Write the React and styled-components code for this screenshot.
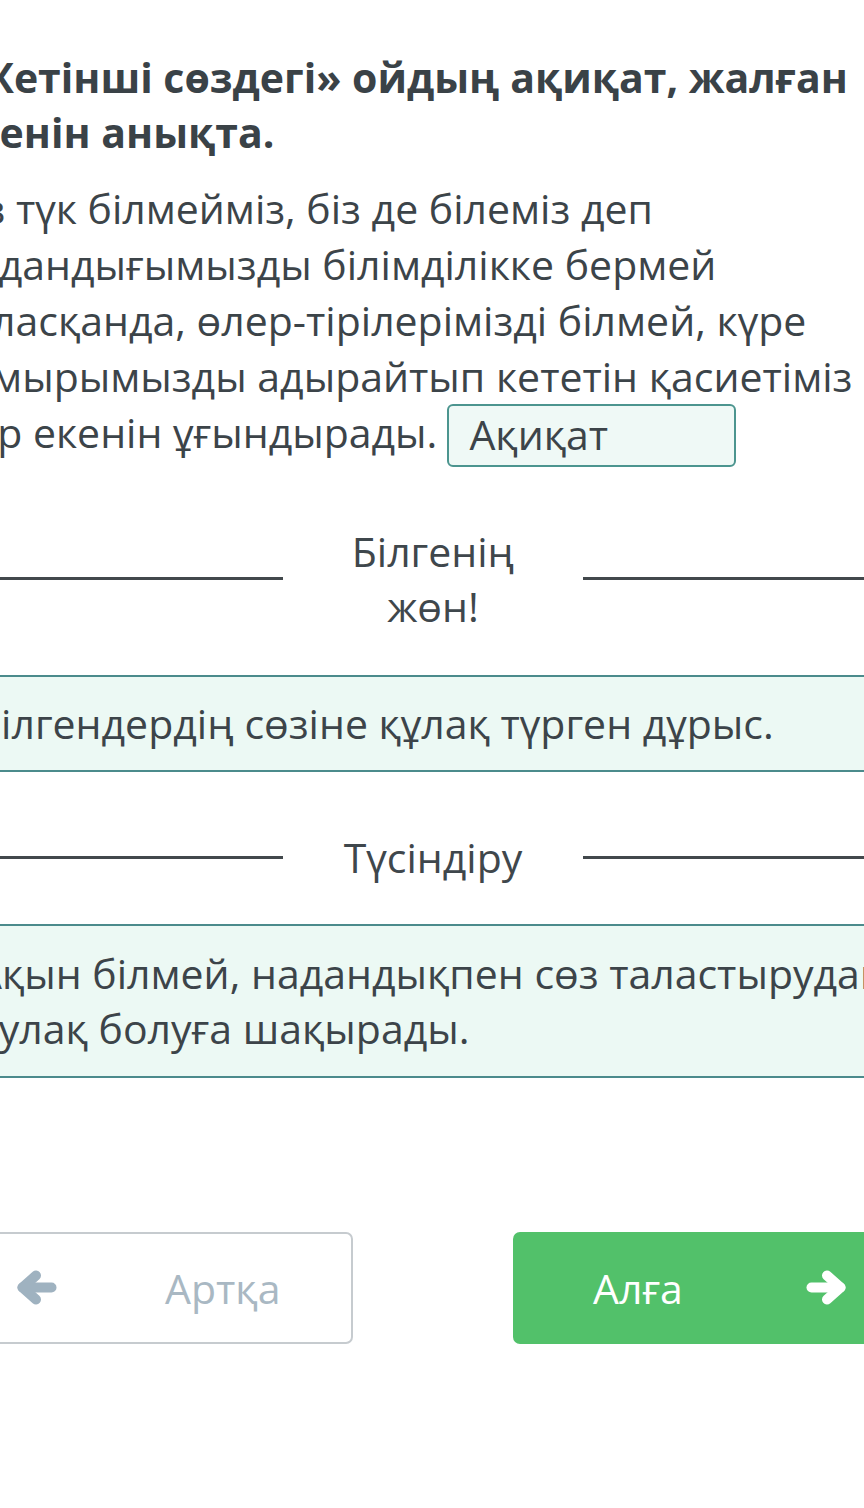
import React from "react";
import styled, { createGlobalStyle } from "styled-components";

const GlobalStyle = createGlobalStyle`
  html, body {
    margin: 0;
    padding: 0;
    background: #ffffff;
    overflow-x: hidden;
  }
  body {
    font-family: "Open Sans", "Noto Sans", sans-serif;
    color: #3c4449;
  }
`;

const Viewport = styled.div`
  width: 100%;
  overflow: hidden;
`;

const Page = styled.div`
  width: 966px;
  margin-left: -50px;
  padding-top: 50px;
  padding-bottom: 165px;
`;

const Title = styled.h2`
  margin: 0;
  font-size: 41px;
  line-height: 55px;
  font-weight: 700;
  color: #3a4247;
  white-space: nowrap;
`;

const Passage = styled.p`
  margin: 20px 0 0;
  font-size: 41px;
  line-height: 56px;
  color: #3c4449;
  white-space: nowrap;
`;

const Answer = styled.span`
  display: inline-block;
  vertical-align: middle;
  position: relative;
  top: -2px;
  box-sizing: border-box;
  width: 289px;
  height: 63px;
  margin-left: 10px;
  padding: 0 20px;
  border: 2px solid #4c958f;
  border-radius: 6px;
  background: #eff9f6;
  line-height: 57px;
`;

const Divider = styled.div`
  display: grid;
  grid-template-columns: 1fr 210px 1fr;
  column-gap: 45px;
  align-items: center;
  margin-top: ${(p) => p.$top}px;
`;

const Rule = styled.div`
  height: 3px;
  background: #42484c;
`;

const DividerLabel = styled.div`
  text-align: center;
  font-size: 41px;
  line-height: 55px;
  color: #3f474c;
`;

const Panel = styled.div`
  margin-top: ${(p) => p.$top}px;
  padding: ${(p) => p.$pad}px 26px;
  border-top: 2px solid #4b8b8c;
  border-bottom: 2px solid #4b8b8c;
  background: #ecf9f4;
  font-size: 41px;
  line-height: ${(p) => p.$lh}px;
  color: #3c4449;
  white-space: nowrap;
`;

const Nav = styled.div`
  display: flex;
  justify-content: space-between;
  margin-top: 154px;
`;

const NavButton = styled.button`
  box-sizing: border-box;
  width: 403px;
  height: 112px;
  display: flex;
  align-items: center;
  padding: 0 0 0 ${(p) => p.$padLeft}px;
  border-radius: 7px;
  font-family: "Open Sans", sans-serif;
  font-size: 41px;
  cursor: pointer;
  border: ${(p) => (p.$primary ? "none" : "2px solid #c6cbcf")};
  background: ${(p) => (p.$primary ? "#52c16a" : "#ffffff")};
  color: ${(p) => (p.$primary ? "#ffffff" : "#a9b8c3")};
`;

const NavLabel = styled.span`
  margin: 0 ${(p) => p.$right || 0}px 0 ${(p) => p.$left || 0}px;
`;

const ArrowSvg = styled.svg`
  flex: none;
  width: 40px;
  height: 35px;
  color: ${(p) => p.$color};
`;

function Arrow({ dir, color }) {
  const flip = dir === "right" ? "translate(40 0) scale(-1 1)" : undefined;
  return (
    <ArrowSvg viewBox="0 0 40 35" $color={color}>
      <g
        transform={flip}
        fill="none"
        stroke="currentColor"
        strokeWidth="10"
        strokeLinecap="round"
        strokeLinejoin="round"
      >
        <polyline points="19,5.5 5.5,17.5 19,29.5" />
        <line x1="5.5" y1="17.5" x2="34.5" y2="17.5" />
      </g>
    </ArrowSvg>
  );
}

export default function App() {
  return (
    <Viewport>
      <GlobalStyle />
      <Page>
        <Title>
          «Жетінші сөздегі» ойдың ақиқат, жалған
          <br />
          екенін анықта.
        </Title>
        <Passage>
          Біз түк білмейміз, біз де білеміз деп
          <br />
          надандығымызды білімділікке бермей
          <br />
          таласқанда, өлер-тірілерімізді білмей, күре
          <br />
          тамырымызды адырайтып кететін қасиетіміз
          <br />
          бар екенін ұғындырады.
          <Answer>Ақиқат</Answer>
        </Passage>

        <Divider $top={55}>
          <Rule />
          <DividerLabel>Білгенің жөн!</DividerLabel>
          <Rule />
        </Divider>

        <Panel $top={41} $pad={19} $lh={55}>
          Білгендердің сөзіне құлақ түрген дұрыс.
        </Panel>

        <Divider $top={58}>
          <Rule />
          <DividerLabel>Түсіндіру</DividerLabel>
          <Rule />
        </Divider>

        <Panel $top={39} $pad={20} $lh={55}>
          Ақын білмей, надандықпен сөз таластырудан
          <br />
          аулақ болуға шақырады.
        </Panel>

        <Nav>
          <NavButton $padLeft={65}>
            <Arrow dir="left" color="#9fb2c0" />
            <NavLabel $left={108}>Артқа</NavLabel>
          </NavButton>
          <NavButton $primary $padLeft={80}>
            <NavLabel $right={123}>Алға</NavLabel>
            <Arrow dir="right" color="#ffffff" />
          </NavButton>
        </Nav>
      </Page>
    </Viewport>
  );
}
